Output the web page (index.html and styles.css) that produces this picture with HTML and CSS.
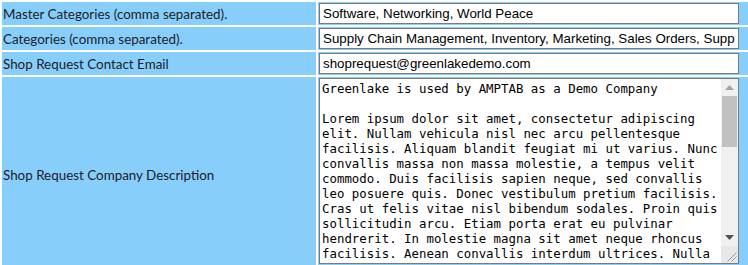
FILE: index.html
```html
<!DOCTYPE html>
<html lang="en">
<head>
    <meta charset="UTF-8">
    <title>Shop Settings</title>
    <link rel="stylesheet" href="styles.css">
</head>
<body>
    <table class="settings">
        <tr>
            <td class="label">Master Categories (comma separated).</td>
            <td class="field"><input type="text" value="Software, Networking, World Peace"></td>
        </tr>
        <tr>
            <td class="label">Categories (comma separated).</td>
            <td class="field"><input type="text" value="Supply Chain Management, Inventory, Marketing, Sales Orders, Supplier Portal, Reporting"></td>
        </tr>
        <tr>
            <td class="label">Shop Request Contact Email</td>
            <td class="field"><input type="text" value="shoprequest@greenlakedemo.com"></td>
        </tr>
        <tr>
            <td class="label">Shop Request Company Description</td>
            <td class="field">
                <!-- textarea with a drawn scrollbar (headless hides the real one) -->
                <div class="editor">
                    <textarea rows="12">Greenlake is used by AMPTAB as a Demo Company

Lorem ipsum dolor sit amet, consectetur adipiscing elit. Nullam vehicula nisl nec arcu pellentesque facilisis. Aliquam blandit feugiat mi ut varius. Nunc convallis massa non massa molestie, a tempus velit commodo. Duis facilisis sapien neque, sed convallis leo posuere quis. Donec vestibulum pretium facilisis. Cras ut felis vitae nisl bibendum sodales. Proin quis sollicitudin arcu. Etiam porta erat eu pulvinar hendrerit. In molestie magna sit amet neque rhoncus facilisis. Aenean convallis interdum ultrices. Nulla facilisi. Vivamus at lorem eget justo ultricies dapibus. Sed vel arcu in magna tincidunt pretium. Morbi sit amet elit a ligula semper faucibus. Curabitur non nisl sed enim posuere tempor.

Pellentesque habitant morbi tristique senectus et netus et malesuada fames ac turpis egestas. Integer eget augue vitae mauris volutpat luctus. Suspendisse potenti. Fusce vel lacus sed nunc feugiat consequat. Maecenas et sapien at mi gravida dictum. Phasellus tincidunt, nibh ac bibendum placerat, nisi neque viverra erat, id pulvinar tortor orci ac nibh. Quisque eu velit non est tempus lobortis.

Donec ut turpis vel massa aliquet congue. Vestibulum ante ipsum primis in faucibus orci luctus et ultrices posuere cubilia curae; Nam sodales ligula at ipsum dignissim, nec ultricies lectus fermentum. Praesent a diam nec odio tincidunt porta.</textarea>
                    <div class="scrollbar">
                        <div class="sb-button">
                            <svg width="9" height="5" viewBox="0 0 9 5"><polygon points="0,5 9,5 4.5,0" fill="#a3a3a3"/></svg>
                        </div>
                        <div class="sb-track"><div class="sb-thumb"></div></div>
                        <div class="sb-button">
                            <svg width="9" height="5" viewBox="0 0 9 5"><polygon points="0,0 9,0 4.5,5" fill="#505050"/></svg>
                        </div>
                        <div class="sb-resizer">
                            <svg width="11" height="11" viewBox="0 0 11 11"><line x1="10.5" y1="1.5" x2="1.5" y2="10.5" stroke="#9a9a9a"/><line x1="10.5" y1="5.5" x2="5.5" y2="10.5" stroke="#9a9a9a"/></svg>
                        </div>
                    </div>
                </div>
            </td>
        </tr>
    </table>
</body>
</html>
```

FILE: styles.css
```css
* { box-sizing: border-box; }
body {
    margin: 0;
    padding: 0;
    background-color: #ffffff;
    overflow: hidden;
}
.settings {
    width: 754px;
    border-collapse: separate;
    border-spacing: 2px;
}
.settings td {
    background-color: #87cefa;
    padding: 1px;
}
.label {
    width: 314px;
    font-family: 'Lato', sans-serif;
    font-size: 13.4px;
    color: #1c1c2a;
    vertical-align: middle;
}
.field {
    vertical-align: top;
}
input[type="text"] {
    display: block;
    width: 420px;
    height: 21px;
    margin: 0;
    padding: 1px 3px;
    border: 1px solid #7a7a7a;
    border-radius: 0;
    font-family: 'Liberation Sans', Arial, sans-serif;
    font-size: 13.33px;
    color: #000;
    background: #fff;
}
.editor {
    display: flex;
    width: 420px;
    height: 186px;
    margin-bottom: 7px;
    border: 1px solid #7a7a7a;
    background: #fff;
}
.editor textarea {
    flex: 1;
    min-width: 0;
    height: 100%;
    margin: 0;
    padding: 2px 2px;
    border: none;
    outline: none;
    font-family: 'DejaVu Sans Mono', monospace;
    font-size: 12.4px;
    line-height: 15px;
    color: #000;
    background: #fff;
    resize: none;
    overflow: hidden;
}
.scrollbar {
    width: 17px;
    display: flex;
    flex-direction: column;
    background-color: #f0f0f0;
}
.sb-button, .sb-resizer {
    height: 17px;
    flex: none;
    display: flex;
    align-items: center;
    justify-content: center;
}
.sb-resizer {
    align-items: flex-end;
    justify-content: flex-end;
    padding: 0 1px 1px 0;
    background-color: #e8e8e8;
}
.sb-track {
    flex: 1;
    padding: 0 1px;
}
.sb-thumb {
    height: 51px;
    background-color: #c1c1c1;
}
```
